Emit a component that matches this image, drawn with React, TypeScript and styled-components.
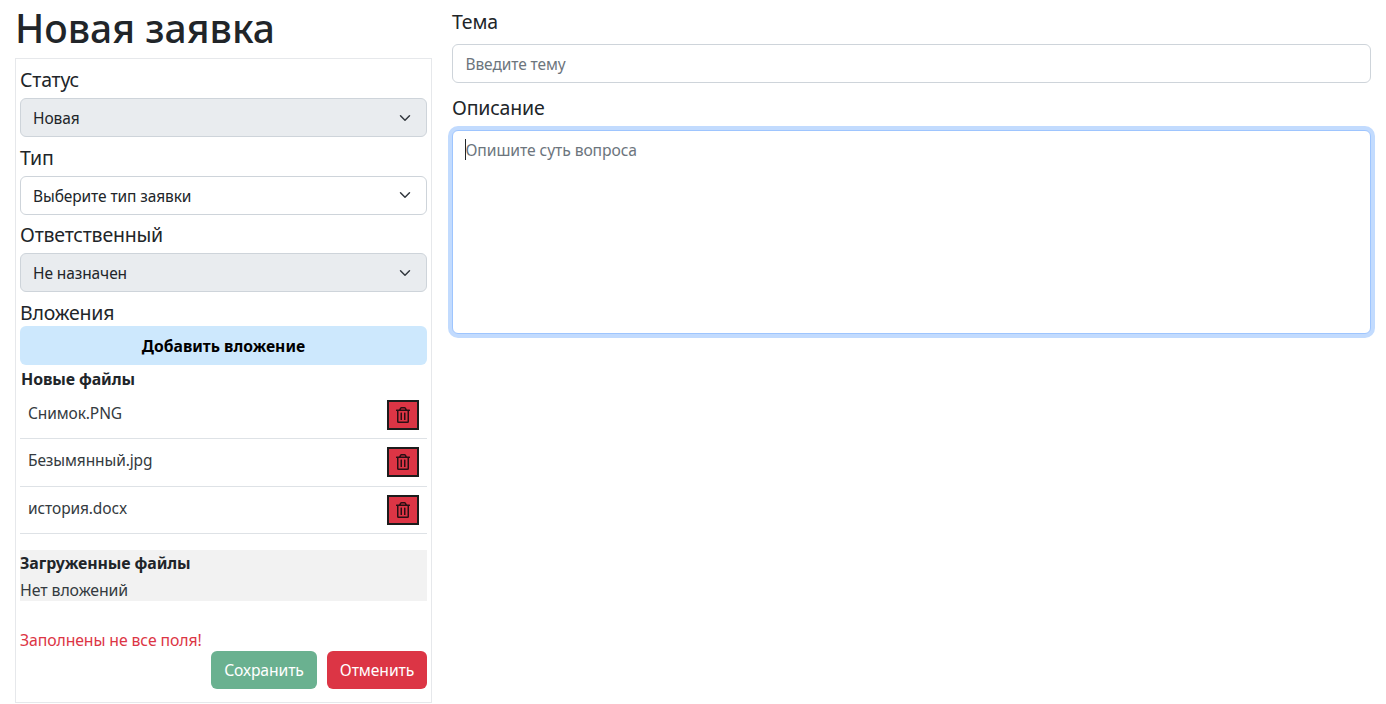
import React from "react";
import styled, { createGlobalStyle } from "styled-components";
import { FaRegTrashAlt } from "react-icons/fa";

const Global = createGlobalStyle`
  * { box-sizing: border-box; }
  html, body { margin: 0; padding: 0; background: #fff; }
  body { font-family: "Noto Sans", "Open Sans", "Liberation Sans", sans-serif; color: #212529; font-size: 15.5px; }
`;

const Page = styled.div`
  display: grid;
  grid-template-columns: 417px 919px;
  column-gap: 20px;
  padding: 0 15px;
  width: 1386px;
  height: 704px;
  overflow: hidden;
`;

const Side = styled.aside`
  display: flex;
  flex-direction: column;
`;

const Title = styled.h1`
  margin: 0;
  height: 58px;
  font-size: 39px;
  font-weight: 500;
  line-height: 55px;
`;

const Panel = styled.div`
  display: flex;
  flex-direction: column;
  height: 645px;
  padding: 4px;
  border: 1px solid #e6e8eb;
`;

const Field = styled.div`
  height: 77.6px;
  flex: none;
  display: flex;
  flex-direction: column;
`;

const Label = styled.label`
  display: block;
  height: 35px;
  font-size: 19.5px;
  line-height: 33px;
  letter-spacing: -0.2px;
`;

const Select = styled.select<{ $locked?: boolean }>`
  appearance: none;
  display: block;
  width: 100%;
  height: 39px;
  padding: 1px 36px 0 12px;
  font: inherit;
  font-size: 15.5px;
  letter-spacing: -0.1px;
  color: #212529;
  border: 1px solid #ced4da;
  border-radius: 6px;
  opacity: 1;
  background-color: ${(p) => (p.$locked ? "#e9ecef" : "#fff")};
  background-image: url("data:image/svg+xml,%3csvg xmlns='http://www.w3.org/2000/svg' viewBox='0 0 16 16'%3e%3cpath fill='none' stroke='%23343a40' stroke-linecap='round' stroke-linejoin='round' stroke-width='2' d='m2 5 6 6 6-6'/%3e%3c/svg%3e");
  background-repeat: no-repeat;
  background-position: right 14px center;
  background-size: 14px 12px;
`;

const SectionLabel = styled(Label)`
  height: 30.4px;
  line-height: 33px;
`;

const AddButton = styled.button`
  flex: none;
  width: 100%;
  height: 39px;
  border: 0;
  border-radius: 6px;
  background: #cde8fd;
  color: #000;
  font: inherit;
  font-size: 15.7px;
  font-weight: 700;
`;

const FilesHeading = styled.div<{ $tight?: boolean }>`
  font-size: 15.9px;
  font-weight: 700;
  line-height: ${(p) => (p.$tight ? "26px" : "22px")};
  margin-bottom: ${(p) => (p.$tight ? "0" : "2px")};
  letter-spacing: -0.1px;
  padding-left: ${(p) => (p.$tight ? "0" : "1px")};
`;

const NewFiles = styled.section`
  padding-top: 3px;
  height: 185px;
  flex: none;
`;

const FileRow = styled.div`
  display: flex;
  align-items: center;
  justify-content: space-between;
  height: 47.2px;
  padding: 0 8px;
  border-bottom: 1px solid #dee2e6;
  font-size: 15.5px;
  letter-spacing: -0.1px;
  color: #343a40;
`;

const FileName = styled.span`
  position: relative;
  top: -2px;
`;

const DeleteButton = styled.button`
  display: flex;
  align-items: center;
  justify-content: center;
  width: 32px;
  height: 30px;
  padding: 0;
  border: 2px solid #1c1c1c;
  background: #dc3545;
  color: #2a0f14;
  font-size: 16px;
`;

const Uploaded = styled.section`
  flex: none;
  height: 51px;
  background: #f2f2f2;
`;

const EmptyNote = styled.div`
  font-size: 15.9px;
  line-height: 28px;
  height: 25px;
  letter-spacing: -0.1px;
  color: #343a40;
`;

const ErrorText = styled.div`
  margin-top: 28px;
  height: 22px;
  font-size: 15.8px;
  line-height: 23px;
  letter-spacing: -0.1px;
  color: #dc3545;
`;

const Actions = styled.div`
  display: flex;
  justify-content: flex-end;
  gap: 10px;
`;

const ActionButton = styled.button<{ $kind: "save" | "cancel" }>`
  height: 38px;
  padding: 0;
  width: ${(p) => (p.$kind === "save" ? "106px" : "100px")};
  border: 0;
  border-radius: 6px;
  color: #fff;
  font: inherit;
  font-size: 15.7px;
  letter-spacing: -0.1px;
  background: ${(p) => (p.$kind === "save" ? "#6ab190" : "#dc3545")};
`;

const Main = styled.main`
  display: flex;
  flex-direction: column;
`;

const MainLabel = styled.label`
  display: block;
  height: 44px;
  font-size: 19.5px;
  line-height: 44px;
  letter-spacing: -0.2px;
`;

const SecondLabel = styled(MainLabel)`
  height: 47px;
  line-height: 50px;
`;

const TextInput = styled.input`
  display: block;
  width: 100%;
  height: 39px;
  padding: 0 12.5px;
  font: inherit;
  font-size: 15.5px;
  letter-spacing: -0.1px;
  border: 1px solid #ced4da;
  border-radius: 6px;
  &::placeholder { color: #6c757d; opacity: 1; }
`;

const AreaWrap = styled.div`
  position: relative;
`;

const TextArea = styled.textarea`
  display: block;
  width: 100%;
  height: 204px;
  padding: 7px 12.5px;
  resize: none;
  font: inherit;
  font-size: 15.7px;
  line-height: 24px;
  letter-spacing: -0.1px;
  border: 1px solid #9ec5fe;
  border-radius: 6px;
  outline: 0;
  box-shadow: 0 0 0 4px #c2dbfe;
  caret-color: transparent;
  &::placeholder { color: #6c757d; opacity: 1; }
`;

const Caret = styled.span`
  position: absolute;
  left: 13px;
  top: 9px;
  width: 1px;
  height: 21px;
  background: #212529;
`;

const files = ["Снимок.PNG", "Безымянный.jpg", "история.docx"];

export default function App() {
  return (
    <Page>
      <Global />
      <Side>
        <Title>Новая заявка</Title>
        <Panel>
          <Field>
            <Label>Статус</Label>
            <Select $locked disabled defaultValue="new">
              <option value="new">Новая</option>
            </Select>
          </Field>
          <Field>
            <Label>Тип</Label>
            <Select defaultValue="">
              <option value="">Выберите тип заявки</option>
            </Select>
          </Field>
          <Field>
            <Label>Ответственный</Label>
            <Select $locked disabled defaultValue="none">
              <option value="none">Не назначен</option>
            </Select>
          </Field>
          <SectionLabel>Вложения</SectionLabel>
          <AddButton type="button">Добавить вложение</AddButton>
          <NewFiles>
            <FilesHeading>Новые файлы</FilesHeading>
            {files.map((name) => (
              <FileRow key={name}>
                <FileName>{name}</FileName>
                <DeleteButton type="button" aria-label="Удалить">
                  <FaRegTrashAlt />
                </DeleteButton>
              </FileRow>
            ))}
          </NewFiles>
          <Uploaded>
            <FilesHeading $tight>Загруженные файлы</FilesHeading>
            <EmptyNote>Нет вложений</EmptyNote>
          </Uploaded>
          <ErrorText>Заполнены не все поля!</ErrorText>
          <Actions>
            <ActionButton type="button" $kind="save">Сохранить</ActionButton>
            <ActionButton type="button" $kind="cancel">Отменить</ActionButton>
          </Actions>
        </Panel>
      </Side>
      <Main>
        <MainLabel>Тема</MainLabel>
        <TextInput placeholder="Введите тему" />
        <SecondLabel>Описание</SecondLabel>
        <AreaWrap>
          <TextArea placeholder="Опишите суть вопроса" />
          <Caret />
        </AreaWrap>
      </Main>
    </Page>
  );
}
